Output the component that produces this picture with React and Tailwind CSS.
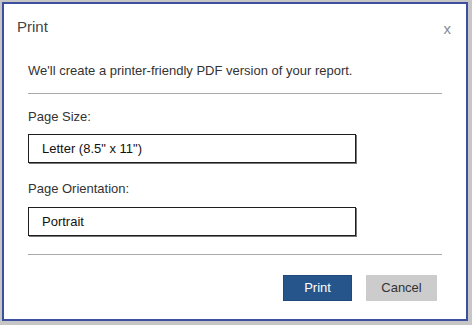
export default function App() {
  return (
    <div className="w-[472px] h-[325px] bg-[#c6c6c6] pt-[2px] pl-[2px]" style={{ fontFamily: '"Liberation Sans", Arial, sans-serif' }}>
      <div className="w-[466px] h-[319px] bg-white border-2 border-[#3d4f9f] flex flex-col">
        <div className="flex justify-between items-start h-[17px] mt-[14px] pl-[13px] pr-[15px]">
          <div className="text-[15px] leading-[17px] text-[#444]">Print</div>
          <div className="text-[15px] leading-[17px] text-[#858b96] mt-[2px]">x</div>
        </div>
        <div className="flex flex-col pl-[24px] pr-[24px]">
          <div className="mt-[28px] text-[13px] leading-[15px] text-[#333]">We'll create a printer-friendly PDF version of your report.</div>
          <div className="mt-[15px] h-px bg-[#a9a9a9]"></div>
          <div className="mt-[15px] text-[13px] leading-[15px] text-[#333]">Page Size:</div>
          <div className="mt-[10px] w-[328px] h-[29px] border border-[#1e1e1e] shadow-[1px_1px_0_#777] flex items-center pl-[13px] text-[13px] text-[#111]">Letter (8.5" x 11")</div>
          <div className="mt-[18px] text-[13px] leading-[15px] text-[#333]">Page Orientation:</div>
          <div className="mt-[11px] w-[328px] h-[29px] border border-[#1e1e1e] shadow-[1px_1px_0_#777] flex items-center pl-[13px] text-[13px] text-[#111]">Portrait</div>
          <div className="mt-[18px] h-px bg-[#a9a9a9]"></div>
          <div className="mt-[20px] flex justify-end gap-[14px] pr-[5px]">
            <button className="w-[69px] h-[26px] bg-[#25558a] text-white text-[13px] border border-[#1f4a7a]">Print</button>
            <button className="w-[71px] h-[26px] bg-[#cccccc] text-[#333] text-[13px]">Cancel</button>
          </div>
        </div>
      </div>
    </div>
  );
}
